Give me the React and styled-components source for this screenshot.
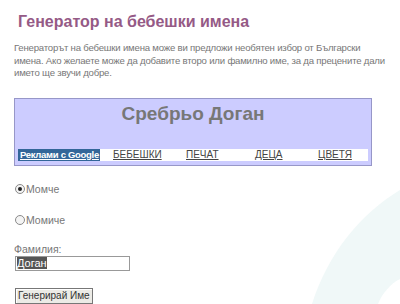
import styled, { createGlobalStyle } from "styled-components";

const GlobalStyle = createGlobalStyle`
  html, body {
    margin: 0;
    padding: 0;
    background: #fff;
    overflow: hidden;
  }
  body {
    font-family: "Liberation Sans", Arial, sans-serif;
  }
`;

const Page = styled.div`
  position: relative;
  width: 400px;
  height: 304px;
  overflow: hidden;
  padding: 0 0 0 14px;
  box-sizing: border-box;
`;

const Swirl = styled.svg`
  position: absolute;
  right: 0;
  bottom: 0;
  z-index: 0;
`;

const Content = styled.div`
  position: relative;
  z-index: 1;
`;

const Title = styled.h1`
  margin: 0;
  padding: 12px 0 0 4px;
  font-size: 16px;
  font-weight: bold;
  color: #955a86;
  line-height: 20px;
`;

const Intro = styled.p`
  margin: 10px 0 0;
  font-size: 9.6px;
  letter-spacing: -0.2px;
  line-height: 12.5px;
  color: #777;
  white-space: nowrap;
`;

const NameBox = styled.div`
  margin-top: 18px;
  width: 358px;
  height: 68px;
  box-sizing: border-box;
  background: #ccccff;
  border: 1px solid #9797c8;
  padding: 5px 3px 0 3px;
  display: flex;
  flex-direction: column;
`;

const BabyName = styled.div`
  text-align: center;
  font-size: 19px;
  font-weight: bold;
  color: #777;
  line-height: 20px;
  flex: 1;
`;

const LinkBar = styled.div`
  background: #fff;
  height: 12px;
  margin-bottom: 4px;
  display: flex;
  align-items: center;
  font-size: 10px;
  white-space: nowrap;
`;

const AdLabel = styled.span`
  background: #336699;
  color: #fff;
  padding: 0 2px;
  line-height: 12px;
  font-size: 9.5px;
  font-weight: bold;
  letter-spacing: -0.3px;
  text-decoration: underline;
  width: 82px;
  box-sizing: border-box;
  flex-shrink: 0;
  margin-right: ${(p) => p.$gap}px;
`;

const NavLink = styled.a`
  color: #444;
  text-decoration: underline;
  line-height: 12px;
  width: ${(p) => p.$w}px;
  flex-shrink: 0;
`;

const RadioRow = styled.label`
  display: flex;
  align-items: center;
  margin-top: ${(p) => p.$top}px;
  font-size: 10.5px;
  color: #777;
  line-height: 12px;
`;

const Radio = styled.input`
  appearance: none;
  margin: 0 1px 0 1px;
  width: 10px;
  height: 10px;
  border-radius: 50%;
  border: 1px solid #8a8a8a;
  background: #f4f4f4;
  box-sizing: border-box;
  display: grid;
  place-content: center;
  &:checked::before {
    content: "";
    width: 4px;
    height: 4px;
    border-radius: 50%;
    background: #222;
  }
`;

const FieldLabel = styled.div`
  margin-top: 17px;
  font-size: 10.5px;
  color: #777;
  line-height: 12px;
`;

const Selected = styled.span`
  background: #555;
  color: #fff;
`;

const FakeInput = styled.div`
  margin: 1px 0 0 1px;
  width: 115px;
  height: 15px;
  box-sizing: border-box;
  border: 1px solid #999;
  padding: 0 1px;
  font-size: 11px;
  line-height: 13px;
`;

const Button = styled.button`
  display: block;
  margin: 17px 0 0 1px;
  height: 16px;
  padding: 0 2px;
  font-family: "Liberation Sans", Arial, sans-serif;
  font-size: 10px;
  line-height: 12px;
  color: #333;
  background: #ecebe6;
  border: 1px solid #777;
  box-shadow: inset 1px 1px 0 #fff;
`;

export default function App() {
  return (
    <>
      <GlobalStyle />
      <Page>
        <Swirl width="140" height="130" viewBox="0 0 140 130">
          <path
            d="M52 130 C68 80 100 40 140 16 L140 105 C130 110 122 120 118 130 Z"
            fill="#f0f8f8"
          />
        </Swirl>
        <Content>
          <Title>Генератор на бебешки имена</Title>
          <Intro>
            Генераторът на бебешки имена може ви предложи необятен избор от Български
            <br />
            имена. Ако желаете може да добавите второ или фамилно име, за да прецените дали
            <br />
            името ще звучи добре.
          </Intro>
          <NameBox>
            <BabyName>Сребрьо Доган</BabyName>
            <LinkBar>
              <AdLabel $gap={13}>Реклами с Google</AdLabel>
              <NavLink $w={73}>БЕБЕШКИ</NavLink>
              <NavLink $w={69}>ПЕЧАТ</NavLink>
              <NavLink $w={63}>ДЕЦА</NavLink>
              <NavLink $w={50}>ЦВЕТЯ</NavLink>
            </LinkBar>
          </NameBox>
          <RadioRow $top={17}>
            <Radio type="radio" name="sex" defaultChecked />
            Момче
          </RadioRow>
          <RadioRow $top={19}>
            <Radio type="radio" name="sex" />
            Момиче
          </RadioRow>
          <FieldLabel>Фамилия:</FieldLabel>
          <FakeInput>
            <Selected>Доган</Selected>
          </FakeInput>
          <Button>Генерирай Име</Button>
        </Content>
      </Page>
    </>
  );
}
